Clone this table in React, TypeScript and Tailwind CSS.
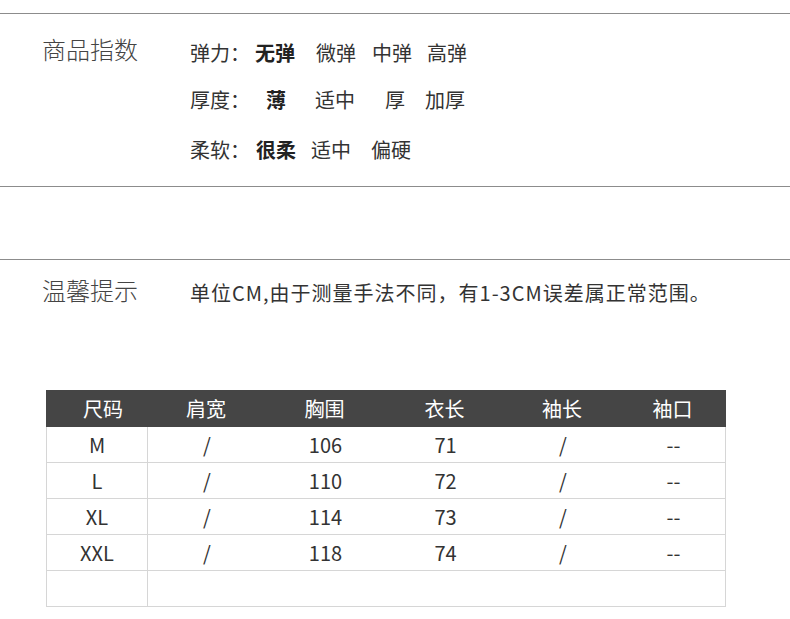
const font = { fontFamily: '"Noto Sans CJK SC", "Noto Sans", sans-serif' }

interface Opt {
  text: string
  ml: string
  bold?: boolean
}

const indexRows: { label: string; mt: string; opts: Opt[] }[] = [
  {
    label: "弹力：",
    mt: "mt-0",
    opts: [
      { text: "无弹", ml: "ml-[5px]", bold: true },
      { text: "微弹", ml: "ml-[21px]" },
      { text: "中弹", ml: "ml-[16px]" },
      { text: "高弹", ml: "ml-[15px]" },
    ],
  },
  {
    label: "厚度：",
    mt: "mt-[23px]",
    opts: [
      { text: "薄", ml: "ml-[16px]", bold: true },
      { text: "适中", ml: "ml-[29px]" },
      { text: "厚", ml: "ml-[30px]" },
      { text: "加厚", ml: "ml-[20px]" },
    ],
  },
  {
    label: "柔软：",
    mt: "mt-[26px]",
    opts: [
      { text: "很柔", ml: "ml-[6px]", bold: true },
      { text: "适中", ml: "ml-[15px]" },
      { text: "偏硬", ml: "ml-[20px]" },
    ],
  },
]

const headers = ["尺码", "肩宽", "胸围", "衣长", "袖长", "袖口"]

const sizes = [
  ["M", "/", "106", "71", "/", "--"],
  ["L", "/", "110", "72", "/", "--"],
  ["XL", "/", "114", "73", "/", "--"],
  ["XXL", "/", "118", "74", "/", "--"],
  ["", "", "", "", "", ""],
]

const cols = "grid grid-cols-[101px_118px_119px_121px_114px_107px]"

function cn(...parts: (string | false | undefined)[]) {
  return parts.filter(Boolean).join(" ")
}

function SizeTable() {
  return (
    <div className="ml-[46px] w-[680px]">
      <div className={cn(cols, "h-[37px] items-center bg-[#454545] text-[20px] text-white")}>
        {headers.map((h, i) => (
          <div key={h} className={i === 0 ? "pl-[13px] text-center" : "text-center"}>
            {h}
          </div>
        ))}
      </div>
      <div className="border-x border-[#d6d6d6]">
        {sizes.map((row, r) => (
          <div key={r} className={cn(cols, "h-[36px] border-b border-[#d6d6d6] text-[20px] text-[#333]")}>
            {row.map((cell, i) => (
              <div
                key={i}
                className={cn(
                  "flex items-center justify-center",
                  i === 0 && "border-r border-[#d6d6d6]"
                )}
              >
                {cell}
              </div>
            ))}
          </div>
        ))}
      </div>
    </div>
  )
}

export default function App() {
  return (
    <div className="h-[619px] w-[790px] overflow-hidden bg-white pt-[13px] text-[#333]" style={font}>
      <section className="flex border-t border-[#8c8c8c] pb-[24px] pt-[27px]">
        <div className="-mt-[3px] w-[190px] shrink-0 pl-[42px] text-[24px] font-light leading-[22px] text-[#444]">
          商品指数
        </div>
        <div className="flex flex-col text-[20px] leading-[24px]">
          {indexRows.map((row) => (
            <div key={row.label} className={cn("flex", row.mt)}>
              <span className="w-[60px]">{row.label}</span>
              {row.opts.map((o) => (
                <span key={o.text} className={cn(o.ml, o.bold && "font-bold text-[#222]")}>
                  {o.text}
                </span>
              ))}
            </div>
          ))}
        </div>
      </section>

      <div className="h-[73px] border-t border-[#8c8c8c]" />

      <section className="flex border-t border-[#8c8c8c] pt-[19px]">
        <div className="-mt-[2px] w-[190px] shrink-0 pl-[42px] text-[24px] font-light leading-[26px] text-[#444]">
          温馨提示
        </div>
        <div className="pt-[1px] text-[20px] leading-[26px] tracking-[1px]">
          单位CM,由于测量手法不同，有1-3CM误差属正常范围。
        </div>
      </section>

      <div className="mt-[84px]">
        <SizeTable />
      </div>
    </div>
  )
}
